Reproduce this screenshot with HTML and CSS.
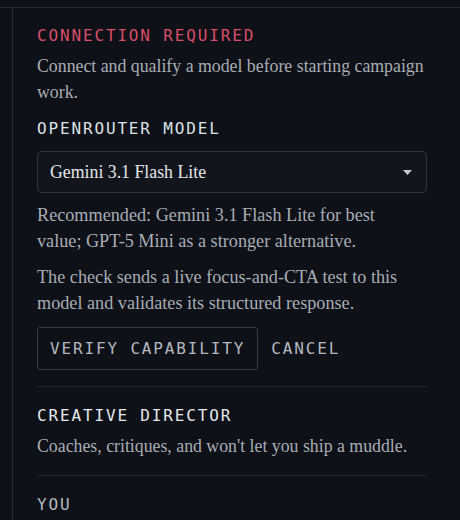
FILE: index.html
```html
<!DOCTYPE html>
<html lang="en">
<head>
<meta charset="utf-8">
<title>Connection</title>
<link rel="stylesheet" href="styles.css">
</head>
<body>
<div class="topbar"></div>
<div class="layout">
  <div class="rail"></div>
  <main class="panel">
    <section class="section">
      <h2 class="label label-alert">Connection required</h2>
      <p class="desc">Connect and qualify a model before starting campaign work.</p>
      <h3 class="label label-field">OpenRouter model</h3>
      <div class="select">
        <span class="select-value">Gemini 3.1 Flash Lite</span>
        <svg class="caret" width="9" height="5" viewBox="0 0 9 5"><path d="M0 0h9L4.5 5z" fill="#c4c8cf"/></svg>
      </div>
      <p class="note">Recommended: Gemini 3.1 Flash Lite for best value; GPT-5 Mini as a stronger alternative.</p>
      <p class="note note-gap">The check sends a live focus-and-CTA test to this model and validates its structured response.</p>
      <div class="actions">
        <button class="btn btn-outline">Verify capability</button>
        <button class="btn btn-plain">Cancel</button>
      </div>
    </section>
    <section class="section">
      <h3 class="label label-title">Creative Director</h3>
      <p class="desc">Coaches, critiques, and won't let you ship a muddle.</p>
    </section>
    <section class="section section-last">
      <h3 class="label label-muted">You</h3>
    </section>
  </main>
</div>
</body>
</html>
```
FILE: styles.css
```css
* { box-sizing: border-box; }
html, body { margin: 0; padding: 0; }
body {
  background: #0e1117;
  width: 460px;
  height: 520px;
  overflow: hidden;
  font-family: "Liberation Serif", "Times New Roman", serif;
}
.topbar {
  height: 8px;
  border-bottom: 1px solid #272b33;
}
.layout {
  display: flex;
  height: 512px;
}
.rail {
  width: 13px;
  flex: none;
  border-right: 1px solid #272b33;
}
.panel {
  flex: 1;
  padding: 16px 33px 0 24px;
}
.section {
  padding-bottom: 16px;
  border-bottom: 1px solid #1f232a;
  margin-bottom: 17px;
}
.section-last { border-bottom: none; }
.label {
  margin: 0;
  font-family: "DejaVu Sans Mono", monospace;
  font-weight: normal;
  font-size: 16px;
  line-height: 24px;
  letter-spacing: 1.85px;
  text-transform: uppercase;
}
.label-alert { color: #d84f6a; }
.label-field { color: #dde1e8; margin-top: 12px; }
.label-title { color: #e6e8ec; }
.label-muted { color: #b7bbc2; }
.desc {
  margin: 5px 0 0;
  font-size: 17.8px;
  line-height: 26px;
  color: #a9adb5;
}
.select {
  margin-top: 10px;
  height: 42px;
  border: 1px solid #2e333c;
  border-radius: 4px;
  background: #12151c;
  display: flex;
  align-items: center;
  justify-content: space-between;
  padding: 0 14px 0 12px;
}
.select-value {
  font-size: 17.8px;
  line-height: 26px;
  color: #e4e6ea;
}
.caret { display: block; }
.note {
  margin: 9px 0 0;
  max-width: 372px;
  font-size: 18.2px;
  line-height: 26px;
  color: #a9adb5;
}
.note-gap { margin-top: 10px; }
.actions {
  display: flex;
  margin-top: 11px;
}
.btn {
  font-family: "DejaVu Sans Mono", monospace;
  font-size: 16px;
  letter-spacing: 1.85px;
  text-transform: uppercase;
  height: 43px;
  padding: 0 12px;
  background: transparent;
  color: #b3b8c0;
  border: 1px solid transparent;
  border-radius: 3px;
  cursor: pointer;
}
.btn-outline { border-color: #363b45; }
```
